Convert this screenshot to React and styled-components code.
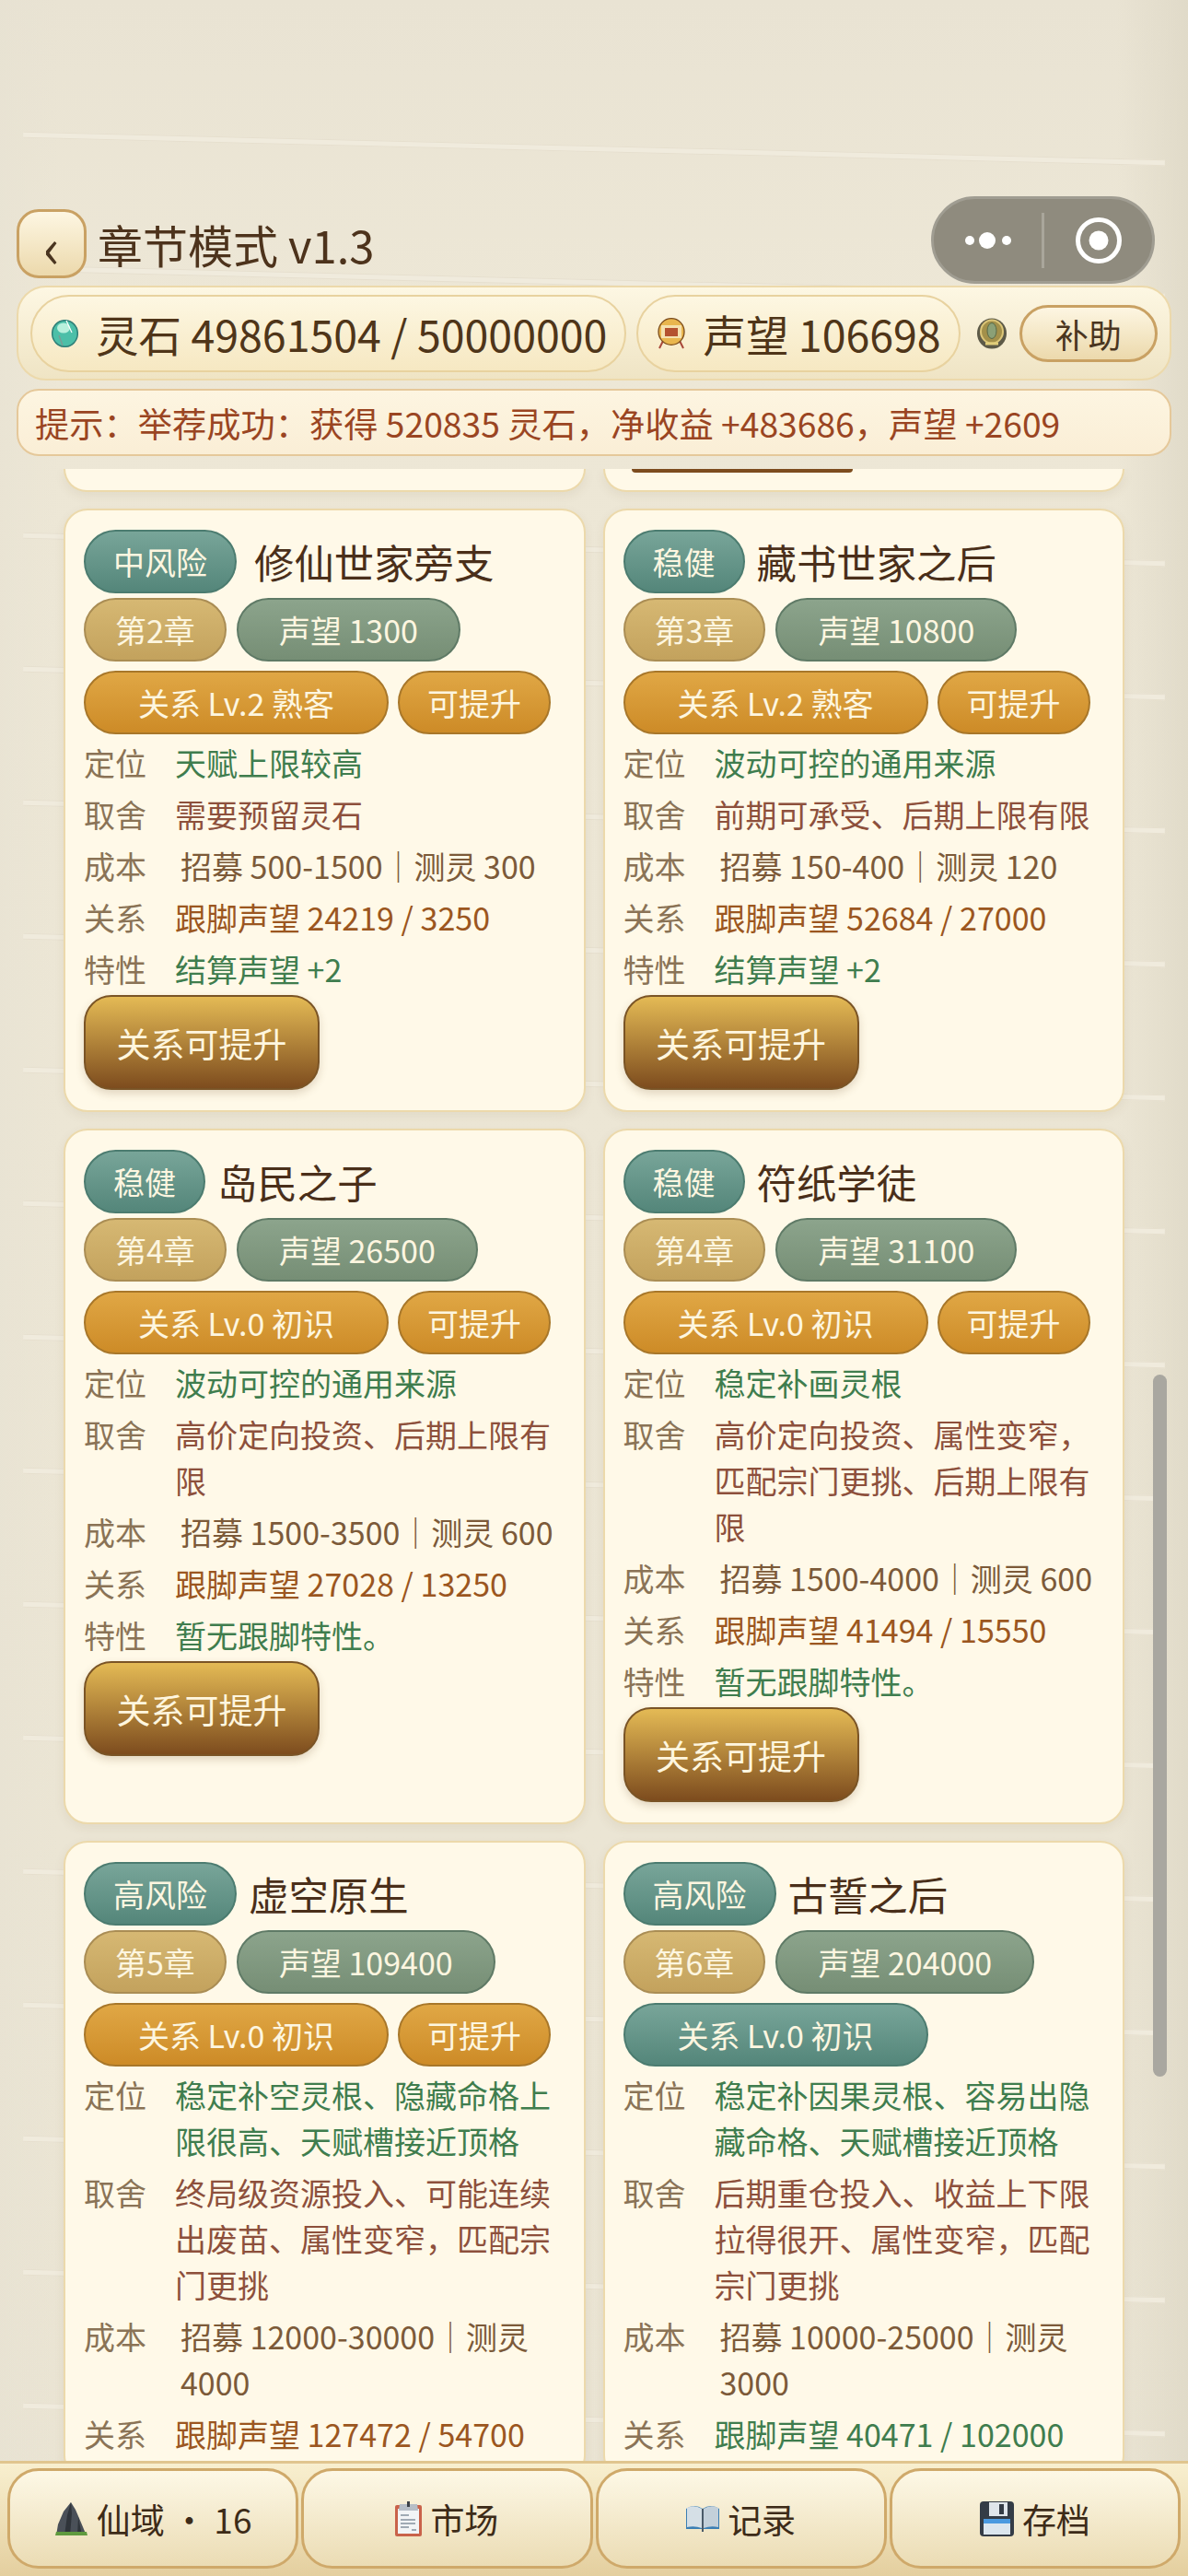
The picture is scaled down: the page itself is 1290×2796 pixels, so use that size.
import React from 'react'
import styled, { createGlobalStyle } from 'styled-components'

const FONT = '"Noto Sans CJK SC", "Noto Sans", sans-serif'

const GlobalStyle = createGlobalStyle`
  html, body {
    margin: 0;
    padding: 0;
    height: 100%;
    overflow: hidden;
  }
  * {
    box-sizing: border-box;
  }
`

const TONES = {
  teal: 'background: linear-gradient(#78a599, #54867a); border-color: #4c7c70;',
  gold: 'background: linear-gradient(#d6b873, #c3a25d); border-color: #aa8d54;',
  sage: 'background: linear-gradient(#8ca48c, #768e75); border-color: #5f7a66;',
  orange: 'background: linear-gradient(#e0a745, #cd8b27); border-color: #a8772a;',
}

const VALUE_COLORS = {
  green: '#3f7d4e',
  red: '#8d503c',
  cost: '#7c5a39',
  rel: '#9b5620',
}

const Page = styled.div`
  position: relative;
  width: 1290px;
  height: 2796px;
  display: flex;
  flex-direction: column;
  overflow: hidden;
  font-family: ${FONT};
  background:
    linear-gradient(90deg, rgba(230, 225, 210, 0.5) 0, rgba(230, 225, 210, 0) 5%, rgba(230, 225, 210, 0) 94%, rgba(222, 216, 198, 0.8) 100%),
    linear-gradient(#e9e3d3, #ede7d6 12%, #eae4d3);
`
const PaperLines = styled.div`
  position: absolute;
  top: 158px;
  left: 25px;
  width: 1240px;
  display: flex;
  flex-direction: column;
  gap: 138px;
`
const PaperLine = styled.div`
  height: 7px;
  background: #f0ebdd;
  border-top: 1px solid #e6dfce;
  border-bottom: 1px solid #e6dfce;
  transform: rotate(1.4deg);
`
const Header = styled.header`
  position: relative;
  padding: 227px 18px 0 18px;
  display: flex;
  flex-direction: column;
`
const TitleRow = styled.div`
  display: flex;
  align-items: center;
  gap: 12px;
  height: 75px;
`
const BackButton = styled.button`
  width: 76px;
  height: 75px;
  padding: 0;
  border: 3px solid #c9a163;
  border-radius: 24px;
  background: linear-gradient(#fdf6e2, #ecd9ac);
  color: #4a3520;
  font-family: ${FONT};
  font-size: 60px;
  line-height: 1;
`
const PageTitle = styled.h1`
  margin: 0;
  font-size: 49px;
  font-weight: 400;
  color: #4d331c;
`
const Capsule = styled.div`
  position: absolute;
  top: 213px;
  left: 1011px;
  width: 243px;
  height: 95px;
  display: flex;
  align-items: center;
  border: 3px solid #a09d92;
  border-radius: 48px;
  background: #8f8b7e;
`
const CapsuleSide = styled.div`
  flex: 1;
  display: flex;
  justify-content: center;
`
const CapsuleDivider = styled.div`
  width: 3px;
  height: 60px;
  background: #a9a69b;
`
const ResourceBar = styled.div`
  margin-top: 8px;
  height: 103px;
  display: flex;
  align-items: center;
  padding: 0 13px;
  border: 2px solid #ecd9ab;
  border-radius: 32px;
  background: linear-gradient(#fdf7e3, #efe4c4);
`
const ResourcePill = styled.div`
  height: 84px;
  margin-right: 11px;
  display: flex;
  align-items: center;
  gap: 19px;
  padding: 0 19px 0 21px;
  border: 2px solid #e8d29f;
  border-radius: 42px;
  background: linear-gradient(#fdf7e2, #f6e8c2);
  color: #4f3519;
  font-size: 46.5px;
  white-space: nowrap;
`
const CoinSlot = styled.div`
  display: flex;
  margin-left: 6px;
`
const HelpButton = styled.button`
  width: 150px;
  height: 62px;
  margin-left: 13px;
  padding: 0;
  border: 3px solid #c9a163;
  border-radius: 31px;
  background: linear-gradient(#fdf6e2, #ecd9ac);
  color: #4a3520;
  font-family: ${FONT};
  font-size: 36px;
`
const Hint = styled.div`
  margin-top: 9px;
  height: 73px;
  display: flex;
  align-items: center;
  padding: 0 18px;
  border: 2px solid #e5c89a;
  border-radius: 24px;
  background: linear-gradient(#fdf5e1, #faeed6);
  color: #9a4522;
  font-size: 37.25px;
  white-space: nowrap;
`
const Scroller = styled.main`
  position: relative;
  flex: 1;
  margin-top: 14px;
  overflow: hidden;
`
const Grid = styled.div`
  width: 1221px;
  padding-left: 69px;
  display: grid;
  grid-template-columns: 1fr 1fr;
  column-gap: 19px;
  row-gap: 17.5px;
`
const CutCard = styled.div`
  height: 25px;
  border: 2px solid #ecd9ab;
  border-top: none;
  border-radius: 0 0 26px 26px;
  background: #fff9e8;
  box-shadow: 0 4px 12px rgba(100, 80, 40, 0.08);
`
const ButtonStub = styled.div`
  width: 240px;
  height: 4px;
  margin-left: 29px;
  border-radius: 0 0 16px 16px;
  background: #7d4c1e;
`
const Card = styled.article`
  padding: 21px 20px 22px;
  border: 2px solid #ecd9ab;
  border-radius: 26px;
  background: #fff9e8;
  box-shadow: 0 4px 12px rgba(100, 80, 40, 0.08);
`
const CardHead = styled.div`
  display: flex;
  align-items: center;
  gap: ${(p) => p.$gap}px;
`
const CardTitle = styled.h2`
  margin: 0;
  font-size: 43.4px;
  font-weight: 400;
  color: #4a2f1a;
  white-space: nowrap;
`
const TagRow = styled.div`
  display: flex;
  gap: ${(p) => p.$gap}px;
  margin-top: ${(p) => p.$top}px;
`
const Tag = styled.span`
  height: 69px;
  ${(p) => (p.$width ? `width: ${p.$width}px;` : '')}
  display: inline-flex;
  align-items: center;
  justify-content: center;
  padding: 0 ${(p) => p.$pad}px;
  border: 2px solid;
  border-radius: 35px;
  ${(p) => TONES[p.$tone]}
  color: #fdf6e0;
  font-size: 34px;
  white-space: nowrap;
`
const Rows = styled.div`
  margin-top: 6.5px;
  display: flex;
  flex-direction: column;
  gap: 6px;
`
const Row = styled.div`
  display: grid;
  grid-template-columns: 68px 1fr;
  column-gap: 31px;
  font-size: 34px;
  line-height: 50px;
`
const RowLabel = styled.span`
  color: #8a7356;
  white-space: nowrap;
`
const RowValue = styled.span`
  color: ${(p) => VALUE_COLORS[p.$kind]};
  ${(p) => (p.$kind === 'cost' ? 'padding-left: 6px;' : '')}
`
const ActionButton = styled.button`
  display: block;
  width: 256px;
  height: 103px;
  margin-top: 3px;
  padding: 0;
  border: 2px solid #7a5426;
  border-radius: 30px;
  background: linear-gradient(#e4ba55, #7d4c1e);
  box-shadow: 0 4px 10px rgba(100, 70, 30, 0.2);
  color: #fff6df;
  font-family: ${FONT};
  font-size: 37px;
`
const ScrollThumb = styled.div`
  position: absolute;
  top: 983px;
  left: 1252px;
  width: 15px;
  height: 762px;
  border-radius: 8px;
  background: #a9a7a0;
`
const BottomBar = styled.nav`
  height: 125px;
  display: grid;
  grid-template-columns: repeat(4, 1fr);
  column-gap: 3px;
  padding: 5px 8px 8px;
  border-top: 3px solid #e0c58f;
  background: linear-gradient(#f8efcf, #e4cf9f);
`
const NavButton = styled.button`
  display: flex;
  align-items: center;
  justify-content: center;
  gap: 9px;
  padding: 0;
  border: 3px solid #cfa96a;
  border-radius: 34px;
  background: linear-gradient(#fdf8e6, #ebdcb4);
  color: #3d2b18;
  font-family: ${FONT};
  font-size: 37px;
  white-space: nowrap;
`

const GemIcon = () => (
  <svg width="29" height="30" viewBox="0 0 29 30">
    <ellipse cx="14.5" cy="15" rx="13.8" ry="14.3" fill="#4cbfa8" stroke="#2f7f78" strokeWidth="1.5" />
    <ellipse cx="13" cy="9" rx="7" ry="5.5" fill="#b8f0dc" />
    <path d="M16 1l6 13" stroke="#fff" strokeWidth="1.2" />
    <path d="M8 17l4 11" stroke="#7b9c94" strokeWidth="1.4" />
  </svg>
)

const MedalIcon = () => (
  <svg width="30" height="34" viewBox="0 0 30 34">
    <path d="M7 23L2 33M23 23l5 10" stroke="#a9483a" strokeWidth="2" />
    <ellipse cx="15" cy="15" rx="14" ry="14.3" fill="#e9b64e" stroke="#7a4a1a" strokeWidth="1.3" />
    <rect x="4" y="8" width="22" height="14" fill="#f5e1ae" />
    <rect x="8" y="11" width="14" height="9" fill="#b4522f" />
  </svg>
)

const CoinIcon = () => (
  <svg width="34" height="34" viewBox="0 0 34 34">
    <ellipse cx="17" cy="17" rx="16" ry="16.5" fill="#5d5a48" />
    <ellipse cx="17" cy="15" rx="12" ry="12.5" fill="#a3904a" stroke="#dcc678" strokeWidth="2" />
    <ellipse cx="17" cy="14" rx="5" ry="8.5" fill="#8ba076" stroke="#5a6a48" strokeWidth="1" />
    <path d="M10 28h14" stroke="#e0cd7a" strokeWidth="3" />
  </svg>
)

const MoreIcon = () => (
  <svg width="52" height="20" viewBox="0 0 52 20">
    <circle cx="6" cy="10" r="5" fill="#fff" />
    <circle cx="25" cy="10" r="9" fill="#fff" />
    <circle cx="46" cy="10" r="5" fill="#fff" />
  </svg>
)

const TargetIcon = () => (
  <svg width="52" height="52" viewBox="0 0 52 52">
    <circle cx="26" cy="26" r="22.5" fill="none" stroke="#fff" strokeWidth="5" />
    <circle cx="26" cy="26" r="10.5" fill="#fff" />
  </svg>
)

const MountainIcon = () => (
  <svg width="37" height="36" viewBox="0 0 37 36">
    <path d="M18 0l5 8 6 14 5 12 1 2H2l2-12 6-14z" fill="#4a5058" />
    <path d="M18 0l-4 14-3 22h6l2-24zM26 16l-1 20h5z" fill="#2f343a" />
    <path d="M2 32h33l1 4H1z" fill="#5f9a3f" />
  </svg>
)

const ClipboardIcon = () => (
  <svg width="29" height="38" viewBox="0 0 29 38">
    <rect x="0" y="4" width="29" height="34" rx="2" fill="#c9624a" />
    <rect x="3" y="8" width="23" height="27" fill="#f2f4f6" />
    <path d="M5 3h19l1 7H4z" fill="#b6bec6" />
    <rect x="13" y="0" width="3" height="6" fill="#3c4248" />
    <path d="M6 15h9M6 20h16M6 24h16M6 28h9M18 31h5" stroke="#a0aab4" strokeWidth="2" />
  </svg>
)

const BookIcon = () => (
  <svg width="36" height="29" viewBox="0 0 36 29">
    <path d="M0 4q9-6 18 0q9-6 18 0v22H0z" fill="#3c7fb4" />
    <path d="M1 3q8-4 16 1v21q-8-3-16-1z" fill="#d5dfe6" />
    <path d="M35 3q-8-4-16 1v21q8-3 16-1z" fill="#c3d0da" />
    <path d="M18 4v25" stroke="#4a5a68" strokeWidth="2" />
  </svg>
)

const FloppyIcon = () => (
  <svg width="37" height="38" viewBox="0 0 37 38">
    <rect width="37" height="38" rx="4" fill="#343c46" />
    <rect x="10" y="1" width="20" height="15" fill="#dfe5ea" />
    <rect x="21" y="3" width="5" height="11" fill="#343c46" />
    <rect x="4" y="19" width="29" height="5" fill="#4a9ae0" />
    <rect x="4" y="24" width="29" height="12" fill="#dbe6ee" />
  </svg>
)

const rows2 = (a, b, c, d, dKind, e) => [
  ['定位', a, 'green'],
  ['取舍', b, 'red'],
  ['成本', c, 'cost'],
  ['关系', d, dKind],
  ...(e ? [['特性', e, 'green']] : []),
]

const CARDS = [
  {
    risk: '中风险', title: '修仙世家旁支', gap: 19, chapter: '第2章', fame: '声望 1300', level: '关系 Lv.2 熟客', action: true,
    rows: rows2('天赋上限较高', '需要预留灵石', '招募 500-1500｜测灵 300', '跟脚声望 24219 / 3250', 'rel', '结算声望 +2'),
  },
  {
    risk: '稳健', title: '藏书世家之后', gap: 13, chapter: '第3章', fame: '声望 10800', level: '关系 Lv.2 熟客', action: true,
    rows: rows2('波动可控的通用来源', '前期可承受、后期上限有限', '招募 150-400｜测灵 120', '跟脚声望 52684 / 27000', 'rel', '结算声望 +2'),
  },
  {
    risk: '稳健', title: '岛民之子', gap: 13, chapter: '第4章', fame: '声望 26500', level: '关系 Lv.0 初识', action: true,
    rows: rows2('波动可控的通用来源', '高价定向投资、后期上限有限', '招募 1500-3500｜测灵 600', '跟脚声望 27028 / 13250', 'rel', '暂无跟脚特性。'),
  },
  {
    risk: '稳健', title: '符纸学徒', gap: 13, chapter: '第4章', fame: '声望 31100', level: '关系 Lv.0 初识', action: true,
    rows: rows2('稳定补画灵根', '高价定向投资、属性变窄，匹配宗门更挑、后期上限有限', '招募 1500-4000｜测灵 600', '跟脚声望 41494 / 15550', 'rel', '暂无跟脚特性。'),
  },
  {
    risk: '高风险', title: '虚空原生', gap: 13, chapter: '第5章', fame: '声望 109400', level: '关系 Lv.0 初识', action: true,
    rows: rows2('稳定补空灵根、隐藏命格上限很高、天赋槽接近顶格', '终局级资源投入、可能连续出废苗、属性变窄，匹配宗门更挑', '招募 12000-30000｜测灵 4000', '跟脚声望 127472 / 54700', 'rel'),
  },
  {
    risk: '高风险', title: '古誓之后', gap: 13, chapter: '第6章', fame: '声望 204000', level: '关系 Lv.0 初识', action: false,
    rows: rows2('稳定补因果灵根、容易出隐藏命格、天赋槽接近顶格', '后期重仓投入、收益上下限拉得很开、属性变窄，匹配宗门更挑', '招募 10000-25000｜测灵 3000', '跟脚声望 40471 / 102000', 'green'),
  },
]

const RecruitCard = ({ card }) => (
  <Card>
    <CardHead $gap={card.gap}>
      <Tag $tone="teal" $pad={30}>{card.risk}</Tag>
      <CardTitle>{card.title}</CardTitle>
    </CardHead>
    <TagRow $gap={11} $top={5}>
      <Tag $tone="gold" $pad={32}>{card.chapter}</Tag>
      <Tag $tone="sage" $pad={44}>{card.fame}</Tag>
    </TagRow>
    <TagRow $gap={10} $top={10}>
      <Tag $tone={card.action ? 'orange' : 'teal'} $pad={0} $width={331}>{card.level}</Tag>
      {card.action && <Tag $tone="orange" $pad={0} $width={166}>可提升</Tag>}
    </TagRow>
    <Rows>
      {card.rows.map(([label, value, kind]) => (
        <Row key={label}>
          <RowLabel>{label}</RowLabel>
          <RowValue $kind={kind}>{value}</RowValue>
        </Row>
      ))}
    </Rows>
    {card.action && card.rows.length > 4 && <ActionButton>关系可提升</ActionButton>}
  </Card>
)

const App = () => {
  return (
    <Page>
      <GlobalStyle />
      <PaperLines>
        {Array.from({ length: 18 }, (_, i) => <PaperLine key={i} />)}
      </PaperLines>
      <Header>
        <TitleRow>
          <BackButton>‹</BackButton>
          <PageTitle>章节模式 v1.3</PageTitle>
        </TitleRow>
        <ResourceBar>
          <ResourcePill><GemIcon />灵石 49861504 / 50000000</ResourcePill>
          <ResourcePill><MedalIcon />声望 106698</ResourcePill>
          <CoinSlot><CoinIcon /></CoinSlot>
          <HelpButton>补助</HelpButton>
        </ResourceBar>
        <Hint>提示：举荐成功：获得 520835 灵石，净收益 +483686，声望 +2609</Hint>
      </Header>
      <Capsule>
        <CapsuleSide><MoreIcon /></CapsuleSide>
        <CapsuleDivider />
        <CapsuleSide><TargetIcon /></CapsuleSide>
      </Capsule>
      <Scroller>
        <Grid>
          <CutCard />
          <CutCard><ButtonStub /></CutCard>
          {CARDS.map((card) => <RecruitCard key={card.title} card={card} />)}
        </Grid>
        <ScrollThumb />
      </Scroller>
      <BottomBar>
        <NavButton><MountainIcon />仙域 · 16</NavButton>
        <NavButton><ClipboardIcon />市场</NavButton>
        <NavButton><BookIcon />记录</NavButton>
        <NavButton><FloppyIcon />存档</NavButton>
      </BottomBar>
    </Page>
  )
}

export default App
